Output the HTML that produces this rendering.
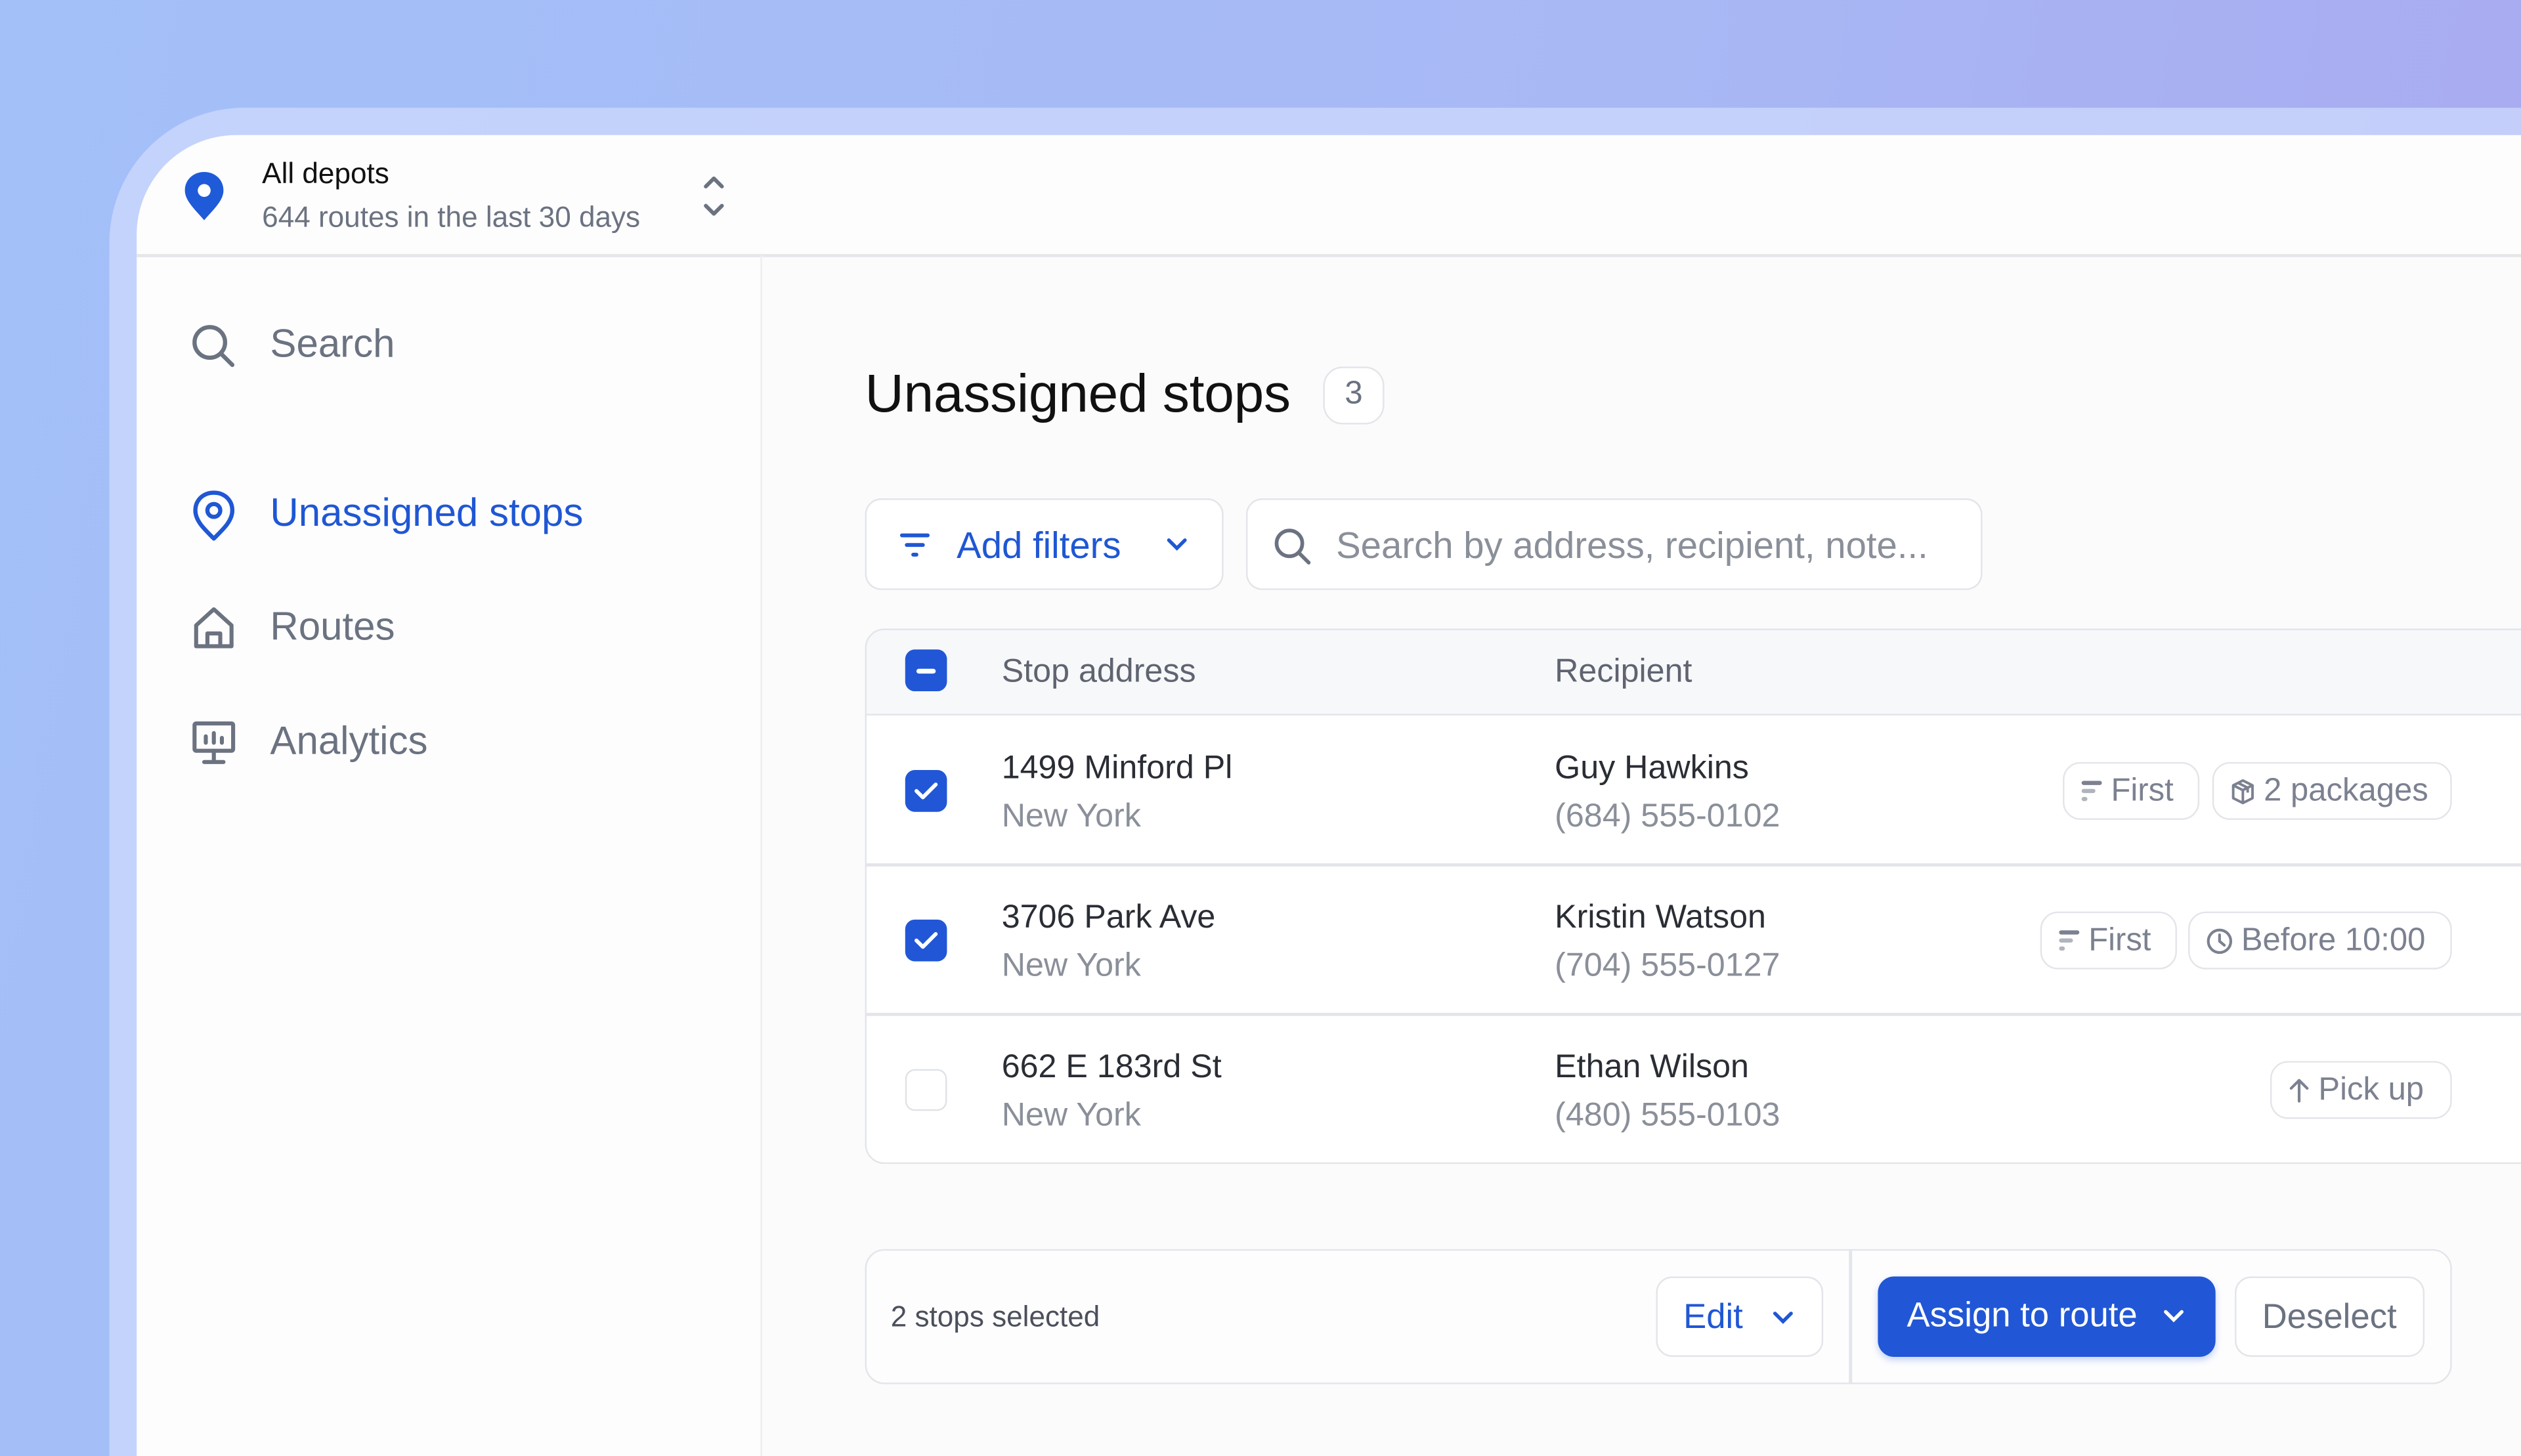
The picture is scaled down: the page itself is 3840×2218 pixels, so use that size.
<!DOCTYPE html>
<html><head><meta charset="utf-8"><style>
*{margin:0;padding:0;box-sizing:border-box}
html,body{width:3840px;height:2218px;overflow:hidden}
body{background:linear-gradient(100deg,#a3c0f9 0%,#a8b8f5 60%,#a9a8ef 100%);font-family:"Liberation Sans",sans-serif;position:relative}
#s{position:absolute;left:0;top:0;width:1568px;height:905.6px;transform:scale(2.44898);transform-origin:0 0;overflow:hidden}
.a{position:absolute}
.rim{left:68px;top:67px;width:1500px;height:839px;border-radius:84px 0 0 0;background:rgba(205,218,252,.75)}
.card{left:85px;top:84px;width:1483px;height:822px;border-radius:62px 0 0 0;background:#fdfdfe;overflow:hidden}
.t{position:absolute;white-space:nowrap}
.g{color:#6b7280}
.pill{position:absolute;height:36px;border:1.5px solid #e3e5ea;border-radius:11px;background:#fff;color:#7c8190;font-size:20px;display:flex;align-items:center;padding:0 10px;gap:5px}
.btn{position:absolute;border:1.5px solid #e3e5ea;border-radius:10px;background:#fff;display:flex;align-items:center}
.cb{position:absolute;left:563px;width:26px;height:26px;border-radius:6px;background:#2157d6;display:flex;align-items:center;justify-content:center}
</style></head><body><div id="s">
<div class="a rim"></div>
<div class="a card">
  <div class="a" style="left:0;top:74px;width:1600px;height:1.5px;background:#e6e7ea"></div>
  <div class="a" style="left:388px;top:75px;width:1.5px;height:900px;background:#eceef1"></div>
  <div class="a" style="left:389px;top:76px;width:1300px;height:900px;background:#fbfbfc"></div>
</div>
<svg class="a" style="left:113px;top:106px" width="28" height="32" viewBox="0 0 28 32"><path d="M14 1C7 1 2 6 2 12.5 2 19 9 25 14 31 19 25 26 19 26 12.5 26 6 21 1 14 1Z" fill="#1f5ad8"/><circle cx="14" cy="12.5" r="4" fill="#fff"/></svg>
<div class="t" style="left:163px;top:98px;font-size:18px;color:#111">All depots</div>
<div class="t g" style="left:163px;top:125px;font-size:18px">644 routes in the last 30 days</div>
<svg class="a" style="left:436px;top:108px" width="16" height="28" viewBox="0 0 16 28" fill="none" stroke="#6b7280" stroke-width="2.4" stroke-linecap="round" stroke-linejoin="round"><path d="M3 8l5-5 5 5M3 20l5 5 5-5"/></svg>
<svg class="a" style="left:117px;top:199px" width="32" height="32" viewBox="0 0 32 32" fill="none" stroke="#6b7280" stroke-width="2.6" stroke-linecap="round"><circle cx="13.5" cy="14" r="9.5"/><path d="M21 21.5l6.5 6.5"/></svg>
<div class="t g" style="left:168px;top:201px;font-size:24.5px">Search</div>
<svg class="a" style="left:118px;top:304px" width="30" height="34" viewBox="0 0 30 34" fill="none" stroke="#1f57d4" stroke-width="2.6" stroke-linejoin="round"><path d="M15 31C9 25 3.5 20 3.5 13.5 3.5 7 8.5 2.5 15 2.5S26.5 7 26.5 13.5C26.5 20 21 25 15 31Z"/><circle cx="15" cy="13.5" r="4"/></svg>
<div class="t" style="left:168px;top:306px;font-size:24.5px;color:#1f57d4">Unassigned stops</div>
<svg class="a" style="left:118px;top:376px" width="30" height="30" viewBox="0 0 30 30" fill="none" stroke="#6b7280" stroke-width="2.5" stroke-linejoin="round"><path d="M4 13L15 3l11 10v13H4Z"/><path d="M11 26v-8h8v8"/></svg>
<div class="t g" style="left:168px;top:377px;font-size:24.5px">Routes</div>
<svg class="a" style="left:118px;top:447px" width="30" height="30" viewBox="0 0 30 30" fill="none" stroke="#6b7280" stroke-width="2.5" stroke-linecap="round"><rect x="3" y="3" width="24" height="17" rx="1"/><path d="M15 20v7M9 27h12M10 15v-4M15 15V9M20 15v-3"/></svg>
<div class="t g" style="left:168px;top:448px;font-size:24.5px">Analytics</div>
<div class="t" style="left:538px;top:227px;font-size:33.5px;color:#111;letter-spacing:-.1px">Unassigned stops</div>
<div class="a" style="left:823px;top:228px;width:38px;height:36px;border:1.5px solid #e3e5ea;border-radius:12px;background:#fff;color:#6b7280;font-size:20px;text-align:center;line-height:33px">3</div>
<div class="btn" style="left:538px;top:310px;width:223px;height:57px">
 <svg class="a" style="left:20px;top:19px" width="20" height="18" viewBox="0 0 20 18" stroke="#1f57d4" stroke-width="2.4" stroke-linecap="round"><path d="M2 3h16M5 9h10M9 15h2"/></svg>
 <div class="t" style="left:56px;top:15px;font-size:23px;color:#1f57d4">Add filters</div>
 <svg class="a" style="left:186px;top:23px" width="14" height="10" viewBox="0 0 14 10" fill="none" stroke="#1f57d4" stroke-width="2.2" stroke-linecap="round"><path d="M2 2l5 5 5-5"/></svg>
</div>
<div class="btn" style="left:775px;top:310px;width:458px;height:57px">
 <svg class="a" style="left:15px;top:16px" width="26" height="26" viewBox="0 0 26 26" fill="none" stroke="#6b7280" stroke-width="2.3" stroke-linecap="round"><circle cx="11" cy="11" r="8"/><path d="M17 17l6 6"/></svg>
 <div class="t" style="left:55px;top:15px;font-size:23px;color:#8a8f99">Search by address, recipient, note...</div>
</div>
<div class="a" style="left:538px;top:391px;width:1100px;height:333px;border:1.5px solid #e3e5ea;border-radius:12px;background:#fff;overflow:hidden">
 <div class="a" style="left:0;top:0;width:100%;height:53px;background:#f7f8fa;border-bottom:1.5px solid #e3e5ea"></div>
 <div class="a" style="left:0;top:145px;width:100%;height:1.5px;background:#e3e5ea"></div>
 <div class="a" style="left:0;top:238px;width:100%;height:1.5px;background:#e3e5ea"></div>
</div>
<div class="cb" style="top:404px"><div style="width:12px;height:3px;background:#fff;border-radius:2px"></div></div>
<div class="t" style="left:623px;top:406px;font-size:20.5px;color:#5f6470">Stop address</div>
<div class="t" style="left:967px;top:406px;font-size:20.5px;color:#5f6470">Recipient</div>
<div class="cb" style="top:479px"><svg width="16" height="12" viewBox="0 0 16 12" fill="none" stroke="#fff" stroke-width="2.4" stroke-linecap="round" stroke-linejoin="round"><path d="M2 6l4 4 8-8"/></svg></div>
<div class="cb" style="top:572px"><svg width="16" height="12" viewBox="0 0 16 12" fill="none" stroke="#fff" stroke-width="2.4" stroke-linecap="round" stroke-linejoin="round"><path d="M2 6l4 4 8-8"/></svg></div>
<div class="cb" style="top:665px;background:#fff;border:1.5px solid #e0e2e7"></div>
<div class="t" style="left:623px;top:466px;font-size:20.5px;color:#2a2d34">1499 Minford Pl</div>
<div class="t" style="left:623px;top:496px;font-size:20.5px;color:#8a8f99">New York</div>
<div class="t" style="left:967px;top:466px;font-size:20.5px;color:#2a2d34">Guy Hawkins</div>
<div class="t" style="left:967px;top:496px;font-size:20.5px;color:#8a8f99">(684) 555-0102</div>
<div class="t" style="left:623px;top:559px;font-size:20.5px;color:#2a2d34">3706 Park Ave</div>
<div class="t" style="left:623px;top:589px;font-size:20.5px;color:#8a8f99">New York</div>
<div class="t" style="left:967px;top:559px;font-size:20.5px;color:#2a2d34">Kristin Watson</div>
<div class="t" style="left:967px;top:589px;font-size:20.5px;color:#8a8f99">(704) 555-0127</div>
<div class="t" style="left:623px;top:652px;font-size:20.5px;color:#2a2d34">662 E 183rd St</div>
<div class="t" style="left:623px;top:682px;font-size:20.5px;color:#8a8f99">New York</div>
<div class="t" style="left:967px;top:652px;font-size:20.5px;color:#2a2d34">Ethan Wilson</div>
<div class="t" style="left:967px;top:682px;font-size:20.5px;color:#8a8f99">(480) 555-0103</div>
<div class="pill" style="left:1283px;top:474px;width:85px"><svg width="14" height="16" viewBox="0 0 14 16" stroke-linecap="round" stroke-width="2.6"><path d="M2 3h10" stroke="#7c8190"/><path d="M2 8h6" stroke="#b0b4bd"/><path d="M2 13h1" stroke="#b0b4bd"/></svg>First</div>
<div class="pill" style="left:1376px;top:474px;width:149px"><svg width="16" height="17" viewBox="0 0 16 17" fill="none" stroke="#7c8190" stroke-width="1.6" stroke-linejoin="round"><path d="M8 1.5l6 3v8l-6 3-6-3v-8Z M2 4.5l6 3 6-3 M8 7.5v8 M5 3l6 3v3"/></svg>2 packages</div>
<div class="pill" style="left:1269px;top:567px;width:85px"><svg width="14" height="16" viewBox="0 0 14 16" stroke-linecap="round" stroke-width="2.6"><path d="M2 3h10" stroke="#7c8190"/><path d="M2 8h6" stroke="#b0b4bd"/><path d="M2 13h1" stroke="#b0b4bd"/></svg>First</div>
<div class="pill" style="left:1361px;top:567px;width:164px"><svg width="17" height="17" viewBox="0 0 17 17" fill="none" stroke="#7c8190" stroke-width="1.7" stroke-linecap="round"><circle cx="8.5" cy="8.5" r="7"/><path d="M8.5 4.5v4l3 2.5"/></svg>Before 10:00</div>
<div class="pill" style="left:1412px;top:660px;width:113px"><svg width="14" height="16" viewBox="0 0 14 16" fill="none" stroke="#7c8190" stroke-width="1.7" stroke-linecap="round" stroke-linejoin="round"><path d="M7 15V2M2 7l5-5 5 5"/></svg>Pick up</div>
<div class="a" style="left:538px;top:777px;width:987px;height:84px;border:1.5px solid #e3e5ea;border-radius:12px;background:#fdfdfe"></div>
<div class="a" style="left:1150px;top:778px;width:1.5px;height:82px;background:#e3e5ea"></div>
<div class="t" style="left:554px;top:809px;font-size:18px;color:#4b505b">2 stops selected</div>
<div class="btn" style="left:1030px;top:794px;width:104px;height:50px">
 <div class="t" style="left:16px;top:12px;font-size:21.5px;color:#1f57d4">Edit</div>
 <svg class="a" style="left:71px;top:20px" width="14" height="10" viewBox="0 0 14 10" fill="none" stroke="#1f57d4" stroke-width="2.2" stroke-linecap="round"><path d="M2 2l5 5 5-5"/></svg>
</div>
<div class="a" style="left:1168px;top:794px;width:210px;height:50px;border-radius:10px;background:#2157d6;box-shadow:0 2px 4px rgba(33,87,214,.25)">
 <div class="t" style="left:18px;top:12px;font-size:21.5px;color:#fff">Assign to route</div>
 <svg class="a" style="left:177px;top:20px" width="14" height="10" viewBox="0 0 14 10" fill="none" stroke="#fff" stroke-width="2.2" stroke-linecap="round"><path d="M2 2l5 5 5-5"/></svg>
</div>
<div class="btn" style="left:1390px;top:794px;width:118px;height:50px">
 <div class="t" style="left:16px;top:12px;font-size:21.5px;color:#6b7280">Deselect</div>
</div>
</div></body></html>
